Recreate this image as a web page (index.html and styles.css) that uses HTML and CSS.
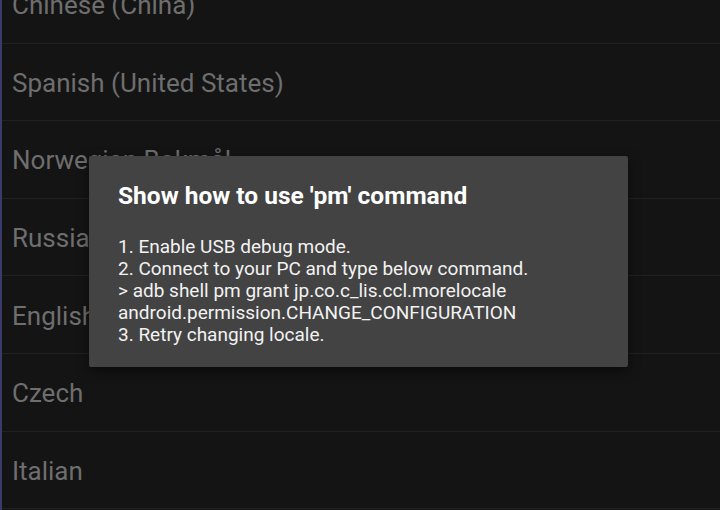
FILE: index.html
```html
<!DOCTYPE html>
<html lang="en">
<head>
    <meta charset="UTF-8">
    <meta name="viewport" content="width=device-width, initial-scale=1.0">
    <title>MoreLocale</title>
    <link rel="stylesheet" href="styles.css">
</head>
<body>
    <div class="screen">
        <ul class="locale-list">
            <li>Chinese (China)</li>
            <li>Spanish (United States)</li>
            <li>Norwegian Bokmål</li>
            <li>Russian</li>
            <li>English</li>
            <li>Czech</li>
            <li>Italian</li>
        </ul>

        <!-- dialog shown when permission is missing -->
        <div class="dialog">
            <h2>Show how to use 'pm' command</h2>
            <div class="message">
                <p>1. Enable USB debug mode.</p>
                <p>2. Connect to your PC and type below command.</p>
                <p>&gt; adb shell pm grant jp.co.c_lis.ccl.morelocale android.permission.CHANGE_CONFIGURATION</p>
                <p>3. Retry changing locale.</p>
            </div>
        </div>
    </div>
</body>
</html>
```

FILE: styles.css
```css
html, body {
    margin: 0;
    padding: 0;
    background-color: #141414;
    font-family: Roboto, "Noto Sans", sans-serif;
}

.screen {
    position: relative;
    width: 720px;
    height: 510px;
    overflow: hidden;
    border-left: 2px solid #3a3a68;
    box-sizing: border-box;
}

.locale-list {
    list-style: none;
    margin: -34px 0 0 0;
    padding: 0;
}

.locale-list li {
    height: 77.6px;
    box-sizing: border-box;
    display: flex;
    align-items: center;
    padding: 2px 0 0 10px;
    border-bottom: 1px solid #212121;
    color: #6e6e6e;
    font-size: 26px;
}

.dialog {
    position: absolute;
    left: 87px;
    top: 156px;
    width: 539px;
    height: 211px;
    box-sizing: border-box;
    padding: 26px 29px 21px;
    background-color: #434343;
    border-radius: 2px;
    box-shadow: 0 4px 12px rgba(0, 0, 0, 0.5);
}

.dialog h2 {
    margin: 0 0 26px;
    font-size: 24.5px;
    font-weight: 700;
    line-height: 28px;
    color: #ffffff;
}

.message {
    font-size: 19px;
    line-height: 22px;
    color: #f2f2f2;
}

.message p {
    margin: 0;
}
```
